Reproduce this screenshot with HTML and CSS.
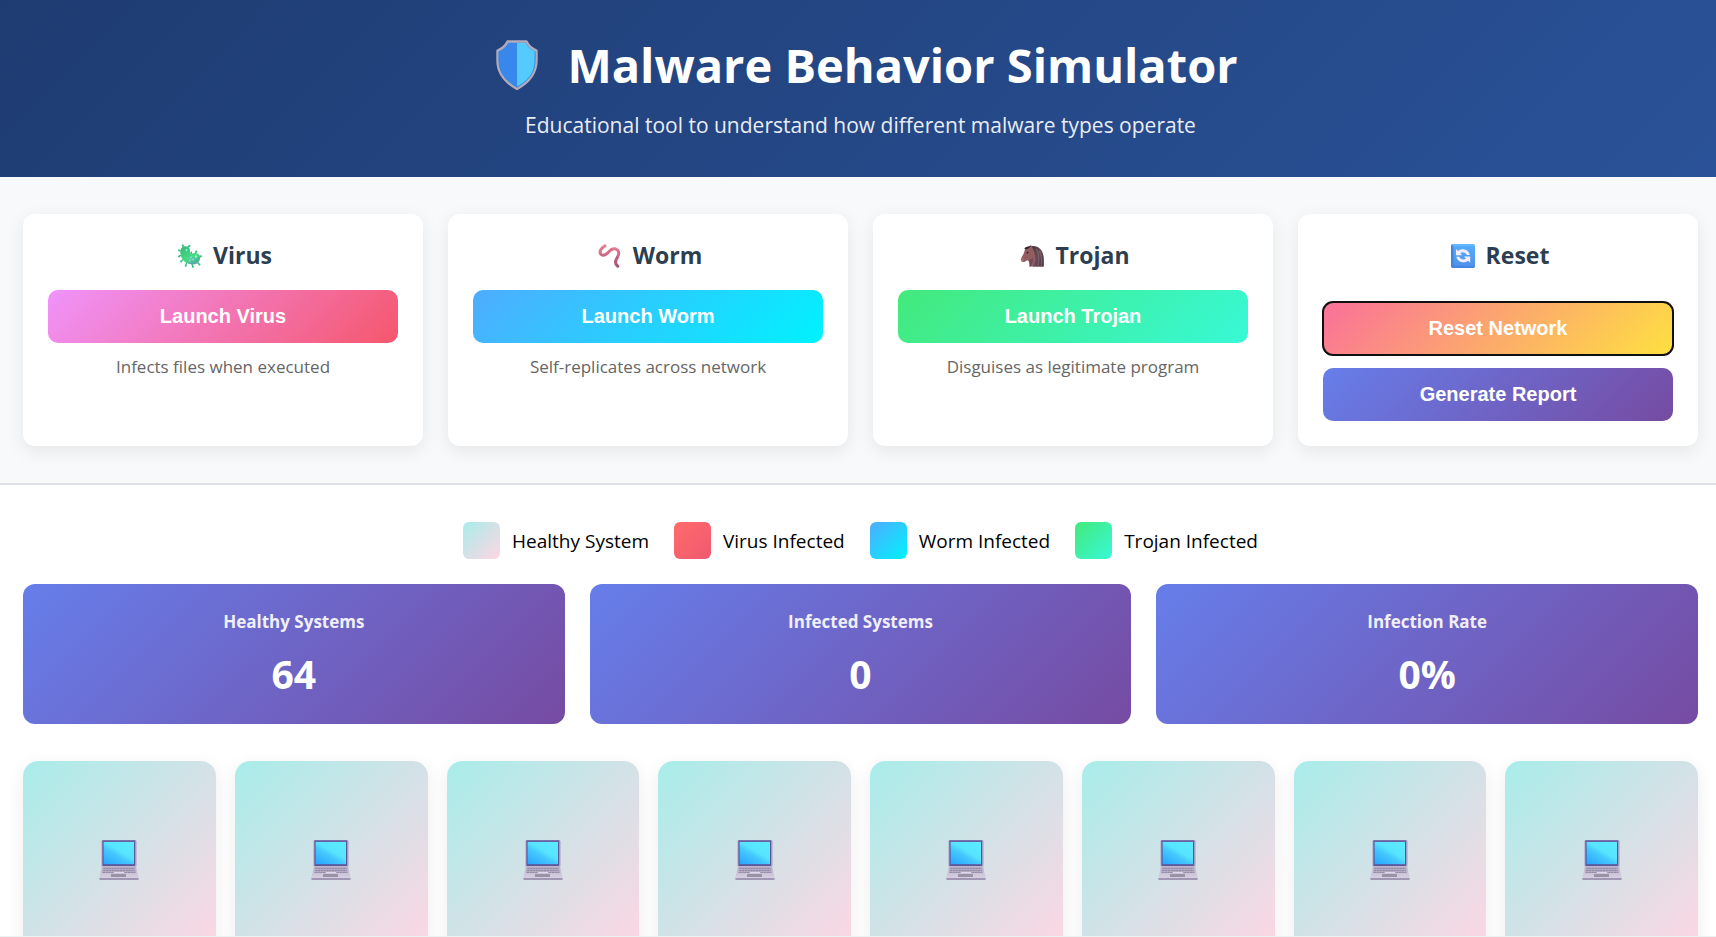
FILE: index.html
```html
<!DOCTYPE html>
<html lang="en">
<head>
<meta charset="utf-8">
<meta name="viewport" content="width=device-width, initial-scale=1">
<title>Malware Behavior Simulator</title>
<link rel="stylesheet" href="styles.css">
</head>
<body>
<svg class="defs" aria-hidden="true">
  <defs>
    <linearGradient id="screen" x1="0" y1="1" x2=".8" y2="0">
      <stop offset="0" stop-color="#28a4ff"/><stop offset=".45" stop-color="#44c8ff"/><stop offset=".62" stop-color="#57e4ff"/><stop offset="1" stop-color="#5ceaff"/>
    </linearGradient>
    <linearGradient id="base" x1="0" y1="0" x2="0" y2="1">
      <stop offset="0" stop-color="#bdb5cc"/><stop offset="1" stop-color="#d5cfe1"/>
    </linearGradient>
    <linearGradient id="wormfill" x1="0" y1="0" x2="0" y2="1">
      <stop offset="0" stop-color="#ea7f92"/><stop offset="1" stop-color="#a9547c"/>
    </linearGradient>
    <linearGradient id="germ" x1="0" y1="0" x2=".7" y2="1">
      <stop offset="0" stop-color="#35b878"/><stop offset=".65" stop-color="#45dc86"/><stop offset="1" stop-color="#4fae9a"/>
    </linearGradient>
    <linearGradient id="keycap" x1="0" y1="0" x2="0" y2="1">
      <stop offset="0" stop-color="#55b0fb"/><stop offset="1" stop-color="#4f8fe8"/>
    </linearGradient>
    <linearGradient id="mane" x1="0" y1="0" x2="1" y2="1">
      <stop offset="0" stop-color="#4b3138"/><stop offset=".5" stop-color="#68505a"/><stop offset="1" stop-color="#4a3240"/>
    </linearGradient>
  </defs>
  <symbol id="laptop" viewBox="0 0 40 40">
    <rect x="2.5" y="0" width="35" height="27" rx="1.4" fill="#a79bc4"/>
    <rect x="3.5" y=".3" width="32.5" height="25.7" rx="1" fill="#5d5598"/>
    <rect x="3.5" y="0" width="32.5" height="1.4" rx=".7" fill="#7773ad"/>
    <rect x="4.6" y="2" width="30.4" height="22.2" fill="url(#screen)"/>
    <path d="M3 26h34l2.700 12H.3z" fill="url(#base)"/>
    <path d="M4 27h32l1 6H3z" fill="#b4abc5"/>
    <path d="M4.500 28.500h31M4.200 30.500h31.600M3.800 32.500h32.400" stroke="#9288a3" stroke-width="1" stroke-dasharray="2 .8"/>
    <path d="M15 32.500h10" stroke="#e0d9ea" stroke-width="1"/>
    <rect x="12" y="34" width="15" height="3" fill="#9a93a8"/>
    <path d="M.3 38h39.400v1.100q0 .9-1 .9H1.300q-1 0-1-.9z" fill="#a196b4"/>
  </symbol>
  <symbol id="shield" viewBox="0 0 42 50">
    <path d="M11.500 1.500h19c2 4.500 5 7 10 9v10c0 13-7 21.500-19.500 28.500C8.500 42 1.500 33.500 1.500 20.500v-10c5-2 8-4.500 10-9z" fill="#3887ec" stroke="#b3aab8" stroke-width="2.400" stroke-linejoin="round"/>
    <path d="M21 3h8.700c2 4 4.800 6.500 9.500 8.400v9C39.200 32.500 33 40.300 21 47.300z" fill="#54caff"/>
    <path d="M39 12v8.500C39 32.500 32.500 40.500 21 47 9.500 40.500 3 32.500 3 20.500V12" fill="none" stroke="#2f86e8" stroke-width=".8"/>
  </symbol>
  <symbol id="virus" viewBox="0 0 24 24">
    <g stroke="#2fae70" stroke-width="1.200" stroke-linecap="round">
      <path d="M5.500 4 4.800 1.200M9.500 3.500l1.800-1.700M3 7 .8 6.200M2.800 11.500l-2 .8M4.500 15.800 3 17.500M8.500 19l-.8 2.800M14 20l.8 2.900M19.500 18.500l2 2.200M21.800 13l1.500-.8M17.500 9l.8-1.700M13 9.500l.5-1.500"/>
    </g>
    <g fill="#38c77b">
      <circle cx="4.800" cy="1.400" r="1"/><circle cx="11.500" cy="2" r="1"/><circle cx="1.100" cy="6.400" r="1"/><circle cx="1.300" cy="12.500" r="1"/><circle cx="3.200" cy="17.500" r="1"/><circle cx="7.700" cy="21.700" r="1"/><circle cx="14.800" cy="22.700" r="1"/><circle cx="21.500" cy="20.600" r="1"/><circle cx="22.900" cy="12.300" r="1"/><circle cx="18.300" cy="7.600" r="1"/>
    </g>
    <path d="M7 2.300c3.500 0 5.200 2 5 4.600-.1 2.200.8 3.200 2.600 2.600 4-1.400 7.600.7 7.600 4.300 0 4-3.700 6.800-8.400 6.500C7.400 20 2.400 14.800 2.400 8.500c0-4 1.800-6.200 4.600-6.200z" fill="url(#germ)"/>
    <path d="M10 18.800c3.500 1.200 7.500 1.200 10.500-.8-1.500 2.300-5.500 2.800-8.500 2z" fill="#6a94c4"/>
    <g fill="#8effc0"><circle cx="8.500" cy="6" r="1"/><circle cx="18" cy="12.500" r="1.300"/></g>
    <g fill="#a8cdf5"><circle cx="13" cy="13.500" r=".9"/><circle cx="15" cy="15.500" r=".9"/><circle cx="12" cy="16.500" r=".9"/></g>
  </symbol>
  <symbol id="worm" viewBox="0 0 24 24">
    <path d="M7 1.800C3 3.600 1.200 7.800 2.700 10c2 2.400 5.400.7 7.400-1.600 2.200-2.600 4.700-4.500 7.400-3.500 4.500 1.700 3.600 6 1.400 9.300-2.100 3.200-2 5.700.9 8" fill="none" stroke="url(#wormfill)" stroke-width="3" stroke-linecap="round"/>
    <path d="m3.800 3.800 2 1.600M12.800 4.700l1.400 2.200M18 13l2.500 1.200M17 17.500l2.500-.3" stroke="#8f3c61" stroke-width=".6" opacity=".6"/>
  </symbol>
  <symbol id="horse" viewBox="0 0 24 24">
    <path d="M8.500 3 10.800 1l1.400 1.600C18 2 23 7 23.600 15v7.500H9.500c.4-3-.2-5-1.500-6.300-1.500.3-2.500 1.200-3.700 1.700-1.900.4-3.800-.6-3.500-2.500C2 12 4 10 4.600 6.500c.3-2 2-3.300 3.900-3.500z" fill="#925d60"/>
    <path d="M1.300 14.500c1.500-.6 2.500.3 2.400 1.700l-.8 1.600c-1.500-.1-2.500-1.200-1.600-3.300z" fill="#a8747b"/>
    <path d="M11.500 2.200c7-1 12 4 12.200 12.300v8H12.800c2.300-3 2.900-7 2.200-11-.5-3.500-1.500-6.500-3.500-9.300z" fill="url(#mane)"/>
    <path d="M16 5c3 4 3.500 10 2 17.500M19.500 7c2 4 2.500 9 1.700 15.500" fill="none" stroke="#826b70" stroke-width=".8"/>
    <path d="M8.500 4.200C6.500 6 5.500 5.200 4.200 4.500c1.500-1.600 4.300-2.700 6.600-2z" fill="#372329"/>
    <circle cx="7.500" cy="8.600" r=".9" fill="#281820"/>
    <path d="M9.500 22.500c.5-3-.3-5-1.300-6.300 2.500-.4 3.700-1.200 4.500-2.700.5 3.500-.2 6.500-2 9z" fill="#744757"/>
  </symbol>
  <symbol id="cycle" viewBox="0 0 24 24">
    <rect width="24" height="24" rx="2.200" fill="url(#keycap)"/>
    <path d="M0 2.200Q0 0 2.200 0L2.600 21.500 21.800 22.500 24 21.800Q24 24 21.800 24H2.200Q0 24 0 21.800z" fill="#4384df"/>
    <path d="M1 1h22" stroke="#70c4ff"/>
    <path d="M5 5v6.200h6.200L9.300 9.200c2.300-1.700 5.200-.9 6.600 1.800h3C17.500 5.600 11.200 3.600 7 7z" fill="#f5edff"/>
    <path d="M19.200 18.700v-6.200H13l1.900 2c-2.300 1.700-5.200.9-6.600-1.800h-3c1.400 5.400 7.700 7.400 11.900 4z" fill="#f5edff"/>
  </symbol>
</svg>

<header class="header">
  <h1 class="header-title"><svg class="header-icon" aria-hidden="true"><use href="#shield"/></svg>Malware Behavior Simulator</h1>
  <p class="header-sub">Educational tool to understand how different malware types operate</p>
</header>

<section class="controls">
  <article class="card">
    <h2 class="card-title"><svg class="card-icon" aria-hidden="true"><use href="#virus"/></svg>Virus</h2>
    <button class="btn btn-virus" type="button">Launch Virus</button>
    <p class="card-text">Infects files when executed</p>
  </article>
  <article class="card">
    <h2 class="card-title"><svg class="card-icon" aria-hidden="true"><use href="#worm"/></svg>Worm</h2>
    <button class="btn btn-worm" type="button">Launch Worm</button>
    <p class="card-text">Self-replicates across network</p>
  </article>
  <article class="card">
    <h2 class="card-title"><svg class="card-icon" aria-hidden="true"><use href="#horse"/></svg>Trojan</h2>
    <button class="btn btn-trojan" type="button">Launch Trojan</button>
    <p class="card-text">Disguises as legitimate program</p>
  </article>
  <article class="card">
    <h2 class="card-title"><svg class="card-icon" aria-hidden="true"><use href="#cycle"/></svg>Reset</h2>
    <div class="btn-stack">
      <button class="btn btn-reset" type="button">Reset Network</button>
      <button class="btn btn-report" type="button">Generate Report</button>
    </div>
  </article>
</section>

<main class="main">
  <ul class="legend">
    <li class="legend-item"><span class="swatch swatch-healthy"></span>Healthy System</li>
    <li class="legend-item"><span class="swatch swatch-virus"></span>Virus Infected</li>
    <li class="legend-item"><span class="swatch swatch-worm"></span>Worm Infected</li>
    <li class="legend-item"><span class="swatch swatch-trojan"></span>Trojan Infected</li>
  </ul>

  <section class="stats">
    <div class="stat"><h3 class="stat-label">Healthy Systems</h3><p class="stat-value">64</p></div>
    <div class="stat"><h3 class="stat-label">Infected Systems</h3><p class="stat-value">0</p></div>
    <div class="stat"><h3 class="stat-label">Infection Rate</h3><p class="stat-value">0%</p></div>
  </section>

  <section class="network" aria-label="Network">
    <div class="node"><svg class="node-icon"><use href="#laptop"/></svg></div>
    <div class="node"><svg class="node-icon"><use href="#laptop"/></svg></div>
    <div class="node"><svg class="node-icon"><use href="#laptop"/></svg></div>
    <div class="node"><svg class="node-icon"><use href="#laptop"/></svg></div>
    <div class="node"><svg class="node-icon"><use href="#laptop"/></svg></div>
    <div class="node"><svg class="node-icon"><use href="#laptop"/></svg></div>
    <div class="node"><svg class="node-icon"><use href="#laptop"/></svg></div>
    <div class="node"><svg class="node-icon"><use href="#laptop"/></svg></div>
  </section>
</main>
</body>
</html>
```
FILE: styles.css
```css
* { box-sizing: border-box; margin: 0; padding: 0; }

body {
  height: 100vh;
  overflow: hidden;
  display: flex;
  flex-direction: column;
  background: #fff;
  border-bottom: 1px solid #eaf3f1;
  font-family: "Segoe UI", "Open Sans", "Noto Sans", sans-serif;
  color: #000;
}

.defs { position: absolute; width: 0; height: 0; }

.header {
  flex: none;
  padding: 38px 18px 37px 23px;
  text-align: center;
  color: #fff;
  background: linear-gradient(135deg, #1e3c72 0%, #2a5298 100%);
}
.header-title {
  display: flex;
  justify-content: center;
  align-items: center;
  gap: 16px;
  margin-bottom: 18px;
  font-size: 47px;
  line-height: 54px;
  font-weight: 700;
}
.header-icon { width: 68px; height: 50px; }
.header-sub { font-size: 21px; line-height: 30px; opacity: .9; }

.controls {
  flex: none;
  display: grid;
  grid-template-columns: repeat(4, 1fr);
  gap: 25px;
  padding: 37px 18px 37px 23px;
  background: #f8f9fa;
  border-bottom: 2px solid #dee2e6;
}
.card {
  padding: 25px;
  background: #fff;
  border-radius: 12px;
  box-shadow: 0 5px 18px rgba(0, 0, 0, .08);
  text-align: center;
}
.card-title {
  display: flex;
  justify-content: center;
  align-items: center;
  gap: 7px;
  margin-bottom: 18px;
  font-size: 23px;
  line-height: 33px;
  font-weight: 700;
  color: #2c3e50;
}
.card-icon { width: 32px; height: 24px; }
.card-text { margin-top: 12px; font-size: 17px; line-height: 24px; color: #666; }

.btn {
  display: block;
  width: 100%;
  height: 53px;
  border: 0;
  border-radius: 10px;
  font-family: Arial, "Liberation Sans", sans-serif;
  font-size: 20px;
  font-weight: 700;
  color: #fff;
  cursor: pointer;
}
.btn-stack { display: grid; gap: 13px; padding-top: 12px; }
.btn-virus { background: linear-gradient(135deg, #f093fb 0%, #f5576c 100%); }
.btn-worm { background: linear-gradient(135deg, #4facfe 0%, #00f2fe 100%); }
.btn-trojan { background: linear-gradient(135deg, #43e97b 0%, #38f9d7 100%); }
.btn-reset {
  background: linear-gradient(135deg, #fa709a 0%, #fee140 100%);
  outline: 2px solid #101010;
  outline-offset: -1px;
}
.btn-report { background: linear-gradient(135deg, #667eea 0%, #764ba2 100%); }

.main { flex: 1; min-height: 0; overflow: hidden; padding: 37px 18px 0 23px; }

.legend {
  display: flex;
  justify-content: center;
  flex-wrap: wrap;
  gap: 25px;
  margin-bottom: 25px;
  list-style: none;
}
.legend-item { display: flex; align-items: center; gap: 12px; font-size: 19px; line-height: 26px; }
.swatch { width: 37px; height: 37px; border-radius: 6px; }
.swatch-healthy { background: linear-gradient(135deg, #a8edea 0%, #fed6e3 100%); }
.swatch-virus { background: linear-gradient(135deg, #ff6b6b 0%, #ee5a6f 100%); }
.swatch-worm { background: linear-gradient(135deg, #4facfe 0%, #00f2fe 100%); }
.swatch-trojan { background: linear-gradient(135deg, #43e97b 0%, #38f9d7 100%); }

.stats { display: grid; grid-template-columns: repeat(3, 1fr); gap: 25px; margin-bottom: 37px; }
.stat {
  padding: 25px;
  border-radius: 12px;
  text-align: center;
  color: #fff;
  background: linear-gradient(135deg, #667eea 0%, #764ba2 100%);
}
.stat-label { margin-bottom: 15px; font-size: 17px; line-height: 25px; font-weight: 700; opacity: .9; }
.stat-value { font-size: 39px; line-height: 50px; font-weight: 700; }

.network { display: grid; grid-template-columns: repeat(8, 1fr); gap: 19px; }
.node {
  display: flex;
  justify-content: center;
  align-items: center;
  aspect-ratio: 1;
  padding-top: 5px;
  border-radius: 15px;
  background: linear-gradient(135deg, #a8edea 0%, #fed6e3 100%);
  box-shadow: 0 5px 18px rgba(0, 0, 0, .08);
}
.node-icon { width: 40px; height: 40px; }
```
